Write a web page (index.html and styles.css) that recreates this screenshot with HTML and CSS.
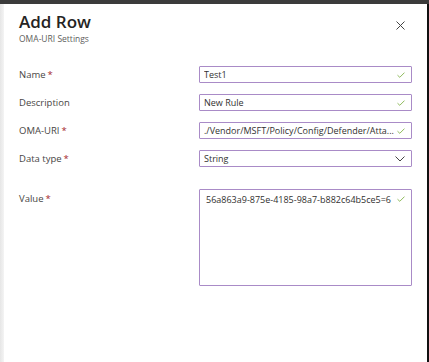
FILE: index.html
```html
<!DOCTYPE html>
<html lang="en">
<head>
  <meta charset="UTF-8">
  <meta name="viewport" content="width=device-width, initial-scale=1.0">
  <title>Add Row - OMA-URI Settings</title>
  <link rel="stylesheet" href="styles.css">
</head>
<body>
  <div class="topbar"></div>

  <div class="page">
    <div class="shade"></div>

    <div class="panel">
      <div class="header">
        <div>
          <h1>Add Row</h1>
          <div class="subtitle">OMA-URI Settings</div>
        </div>
        <button class="close" aria-label="Close">
          <svg width="9" height="9" viewBox="0 0 9 9"><path d="M0.5 0.5 L8.5 8.5 M8.5 0.5 L0.5 8.5" stroke="#444" stroke-width="1" fill="none"/></svg>
        </button>
      </div>

      <div class="form">
        <label class="label">Name <span class="req">*</span></label>
        <div class="field">
          <span class="text">Test1</span>
          <svg class="check" width="8" height="6" viewBox="0 0 8 6"><path d="M0.5 3.2 L2.8 5.3 L7.5 0.6" stroke="#8fba5c" stroke-width="1" fill="none"/></svg>
        </div>

        <label class="label">Description</label>
        <div class="field">
          <span class="text">New Rule</span>
          <svg class="check" width="8" height="6" viewBox="0 0 8 6"><path d="M0.5 3.2 L2.8 5.3 L7.5 0.6" stroke="#8fba5c" stroke-width="1" fill="none"/></svg>
        </div>

        <label class="label">OMA-URI <span class="req">*</span></label>
        <div class="field">
          <span class="text">./Vendor/MSFT/Policy/Config/Defender/Atta...</span>
          <svg class="check" width="8" height="6" viewBox="0 0 8 6"><path d="M0.5 3.2 L2.8 5.3 L7.5 0.6" stroke="#8fba5c" stroke-width="1" fill="none"/></svg>
        </div>

        <label class="label">Data type <span class="req">*</span></label>
        <div class="field">
          <span class="text">String</span>
          <svg class="chevron" width="10" height="6" viewBox="0 0 10 6"><path d="M0.5 0.5 L5 5 L9.5 0.5" stroke="#444" stroke-width="1" fill="none"/></svg>
        </div>

        <label class="label label-top">Value <span class="req">*</span></label>
        <div class="field area">
          <span class="text">56a863a9-875e-4185-98a7-b882c64b5ce5=6</span>
          <svg class="check" width="8" height="6" viewBox="0 0 8 6"><path d="M0.5 3.2 L2.8 5.3 L7.5 0.6" stroke="#8fba5c" stroke-width="1" fill="none"/></svg>
        </div>
      </div>
    </div>

    <div class="edge"></div>
  </div>
</body>
</html>
```

FILE: styles.css
```css
body {
  margin: 0;
  font-family: 'Open Sans', 'Noto Sans', sans-serif;
  color: #323130;
  background-color: #fff;
  height: 362px;
  overflow: hidden;
}
.topbar {
  height: 4px;
  background-color: #3b3b3b;
}
.page {
  display: flex;
  height: 358px;
}
.shade {
  flex: 0 0 4px;
  background: linear-gradient(to right, #e6e6e6, #f4f4f4);
}
.panel {
  flex: 1;
  min-width: 0;
  padding: 0 15px;
}
.edge {
  flex: 0 0 2px;
  background-color: #111;
}
.header {
  display: flex;
  justify-content: space-between;
  align-items: flex-start;
  padding-top: 7px;
}
h1 {
  margin: 0;
  font-size: 17px;
  font-weight: 600;
  line-height: 22px;
  color: #252423;
}
.subtitle {
  font-size: 8.5px;
  color: #605e5c;
  line-height: 12px;
}
.close {
  background: none;
  border: none;
  padding: 0;
  margin: 10px 7px 0 0;
  cursor: pointer;
  display: flex;
}
.form {
  display: grid;
  grid-template-columns: 180px minmax(0, 1fr);
  row-gap: 11px;
  margin-top: 21px;
}
.label {
  font-size: 9.5px;
  color: #484644;
  display: flex;
  align-items: center;
  gap: 2px;
}
.label-top {
  align-items: flex-start;
  margin-top: 11px;
  padding-top: 3px;
}
.req {
  color: #a4262c;
}
.field {
  height: 17px;
  min-width: 0;
  box-sizing: border-box;
  border: 1px solid #a98bc7;
  border-radius: 1px;
  display: flex;
  align-items: center;
  gap: 3px;
  padding: 0 6px 0 4px;
  font-size: 9px;
  color: #323130;
}
.text {
  flex: 1;
  min-width: 0;
  white-space: nowrap;
  overflow: hidden;
}
.area {
  height: 97px;
  margin-top: 11px;
  align-items: flex-start;
  padding-top: 3px;
  padding-left: 6px;
}
.area .check {
  margin-top: 3px;
}
```
